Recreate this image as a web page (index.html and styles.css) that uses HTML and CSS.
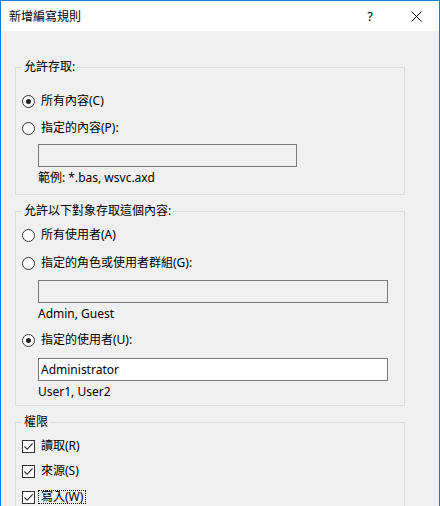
FILE: index.html
```html
<!DOCTYPE html>
<html lang="zh-Hant">
<head>
<meta charset="utf-8">
<title>新增編寫規則</title>
<link rel="stylesheet" href="styles.css">
</head>
<body>
<div class="window">
  <div class="titlebar">
    <span class="title">新增編寫規則</span>
    <span class="tbtn help">?</span>
    <span class="tbtn close">
      <svg width="11" height="11" viewBox="0 0 11 11"><path d="M0.5 0.5 L10.5 10.5 M10.5 0.5 L0.5 10.5" stroke="#000" stroke-width="1" fill="none"/></svg>
    </span>
  </div>
  <div class="content">
    <div class="group g1">
      <div class="legend">允許存取:</div>
      <div class="row r-c"><span class="radio checked"></span><span class="label">所有內容(C)</span></div>
      <div class="row r-p"><span class="radio"></span><span class="label">指定的內容(P):</span></div>
      <div class="input disabled short i1"></div>
      <div class="note n1">範例: *.bas, wsvc.axd</div>
    </div>
    <div class="group g2">
      <div class="legend">允許以下對象存取這個內容:</div>
      <div class="row r-a"><span class="radio"></span><span class="label">所有使用者(A)</span></div>
      <div class="row r-g"><span class="radio"></span><span class="label">指定的角色或使用者群組(G):</span></div>
      <div class="input disabled long i2"></div>
      <div class="note n2">Admin, Guest</div>
      <div class="row r-u"><span class="radio checked"></span><span class="label">指定的使用者(U):</span></div>
      <div class="input long i3">Administrator</div>
      <div class="note n3">User1, User2</div>
    </div>
    <div class="group g3">
      <div class="legend">權限</div>
      <div class="row c1"><span class="check"><svg width="11" height="11" viewBox="0 0 11 11"><path d="M1.5 5.5 L4.2 8.3 L9.6 2.4" stroke="#222" stroke-width="1.1" fill="none"/></svg></span><span class="clabel">讀取(R)</span></div>
      <div class="row c2"><span class="check"><svg width="11" height="11" viewBox="0 0 11 11"><path d="M1.5 5.5 L4.2 8.3 L9.6 2.4" stroke="#222" stroke-width="1.1" fill="none"/></svg></span><span class="clabel">來源(S)</span></div>
      <div class="row c3"><span class="check"><svg width="11" height="11" viewBox="0 0 11 11"><path d="M1.5 5.5 L4.2 8.3 L9.6 2.4" stroke="#222" stroke-width="1.1" fill="none"/></svg></span><span class="clabel focus">寫入(W)</span></div>
    </div>
  </div>
</div>
</body>
</html>
```
FILE: styles.css
```css
html, body {
  margin: 0;
  padding: 0;
  background: #f0f0f0;
}
body {
  font-family: "Noto Sans", "Noto Sans CJK TC", sans-serif;
  font-size: 12px;
  line-height: 16px;
  color: #000;
  width: 440px;
  height: 506px;
  overflow: hidden;
}
.window {
  box-sizing: border-box;
  width: 440px;
  height: 506px;
  border: 1px solid #1c7fd4;
  border-bottom: none;
  background: #f0f0f0;
  display: flex;
  flex-direction: column;
}
.titlebar {
  height: 30px;
  background: #fff;
  display: flex;
  align-items: center;
}
.title {
  flex: 1;
  padding-left: 8px;
  font-family: "Noto Sans CJK TC", sans-serif;
  font-size: 12px;
  line-height: 16px;
}
.tbtn {
  width: 46px;
  height: 30px;
  display: flex;
  align-items: center;
  justify-content: center;
}
.help {
  font-size: 13px;
  font-family: "Noto Sans", sans-serif;
  padding-top: 0px;
}
.close svg {
  display: block;
}
.content {
  padding-left: 14px;
}
.group {
  box-sizing: border-box;
  width: 390px;
  border: 1px solid #dcdcdc;
  display: flex;
  flex-direction: column;
  align-items: flex-start;
}
.g1 {
  margin-top: 36px;
  padding-bottom: 8px;
}
.g2 {
  margin-top: 16px;
  padding-bottom: 5px;
}
.g3 {
  margin-top: 16px;
  height: 100px;
}
.legend {
  margin-top: -9px;
  margin-left: 6px;
  padding: 0 2px;
  height: 16px;
  line-height: 16px;
  background: #f0f0f0;
}
.row {
  display: flex;
  align-items: center;
  height: 20px;
  padding-left: 6px;
}
.radio {
  box-sizing: border-box;
  width: 13px;
  height: 13px;
  border: 1px solid #333;
  border-radius: 50%;
  background: #fff;
  display: flex;
  align-items: center;
  justify-content: center;
  flex: none;
}
.radio.checked::after {
  content: "";
  width: 5px;
  height: 5px;
  border-radius: 50%;
  background: #222;
}
.label {
  margin-left: 6px;
}
.r-c { margin-top: 16px; }
.r-p { margin-top: 7px; }
.r-a { margin-top: 6px; }
.r-g { margin-top: 8px; }
.r-u { margin-top: 8px; }
.input {
  box-sizing: border-box;
  height: 23px;
  border: 1px solid #7a7a7a;
  margin-left: 22px;
  padding-left: 2px;
  line-height: 21px;
  background: #fff;
}
.input.disabled {
  background: #f0f0f0;
}
.short { width: 259px; }
.long { width: 350px; }
.i1 { margin-top: 6px; }
.i2 { margin-top: 7px; }
.i3 { margin-top: 8px; }
.note {
  margin-left: 22px;
  height: 16px;
  margin-top: 3px;
}
.check {
  box-sizing: border-box;
  width: 13px;
  height: 13px;
  border: 1px solid #333;
  background: #fff;
  flex: none;
  display: flex;
  align-items: center;
  justify-content: center;
}
.check svg { display: block; }
.clabel {
  margin-left: 3px;
  padding: 0 2px;
  border: 1px dotted transparent;
  line-height: 12px;
}
.clabel.focus {
  border-color: #000;
}
.c1 { margin-top: 6px; }
.c2 { margin-top: 5px; }
.c3 { margin-top: 6px; }
```
